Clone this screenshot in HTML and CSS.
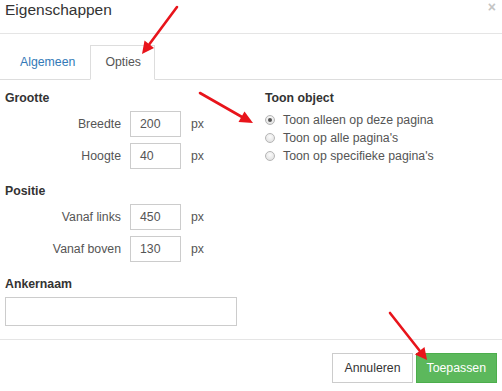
FILE: index.html
```html
<!DOCTYPE html>
<html lang="nl">
<head>
  <meta charset="UTF-8">
  <title>Eigenschappen</title>
  <link rel="stylesheet" href="styles.css">
</head>
<body>

  <div class="dialog">
    <div class="dialog-header">
      <h1>Eigenschappen</h1>
      <span class="close">&times;</span>
    </div>

    <ul class="tabs">
      <li><a href="#">Algemeen</a></li>
      <li class="active"><a href="#">Opties</a></li>
    </ul>

    <div class="dialog-body">
      <div class="columns">
        <div class="col-left">
          <div class="section">
            <h3>Grootte</h3>
            <div class="row"><label>Breedte</label><span class="field">200</span><span class="unit">px</span></div>
            <div class="row"><label>Hoogte</label><span class="field">40</span><span class="unit">px</span></div>
          </div>
          <div class="section">
            <h3>Positie</h3>
            <div class="row"><label>Vanaf links</label><span class="field">450</span><span class="unit">px</span></div>
            <div class="row"><label>Vanaf boven</label><span class="field">130</span><span class="unit">px</span></div>
          </div>
        </div>
        <div class="col-right">
          <h3>Toon object</h3>
          <div class="radio"><span class="dot checked"></span>Toon alleen op deze pagina</div>
          <div class="radio"><span class="dot"></span>Toon op alle pagina's</div>
          <div class="radio"><span class="dot"></span>Toon op specifieke pagina's</div>
        </div>
      </div>
      <div class="section">
        <h3>Ankernaam</h3>
        <div class="wide-field"></div>
      </div>
    </div>

    <div class="dialog-footer">
      <button class="btn">Annuleren</button>
      <button class="btn btn-green">Toepassen</button>
    </div>

    <!-- rode pijlen over de dialoog -->
    <svg class="arrows" width="502" height="391" viewBox="0 0 502 391">
      <g stroke="#e8141b" stroke-width="2.6" fill="#e8141b" stroke-linecap="round">
        <line x1="177" y1="7" x2="149.5" y2="44"/>
        <polygon points="142,54 154,48 144.5,40.5" stroke="none"/>
        <line x1="200" y1="93" x2="242" y2="117"/>
        <polygon points="253,123 238.5,122 244.5,111.5" stroke="none"/>
        <line x1="390" y1="313" x2="419.5" y2="350.5"/>
        <polygon points="427,360 415,354.5 424.5,347" stroke="none"/>
      </g>
    </svg>
  </div>

</body>
</html>
```

FILE: styles.css
```css
body {
  margin: 0;
  font-family: 'Liberation Sans', Arial, sans-serif;
  font-size: 12.3px;
  color: #333;
  background: #fff;
}
.dialog {
  position: relative;
  width: 502px;
  height: 391px;
  overflow: hidden;
}
.dialog-header {
  display: flex;
  justify-content: space-between;
  align-items: flex-start;
  height: 33px;
  border-bottom: 1px solid #e5e5e5;
  padding-left: 5px;
  padding-right: 6px;
}
.dialog-header h1 {
  margin: 0;
  font-size: 15.5px;
  font-weight: normal;
  line-height: 20px;
  color: #333;
}
.close {
  font-size: 14px;
  font-weight: bold;
  line-height: 14px;
  color: #c4c4c4;
}
.tabs {
  display: flex;
  list-style: none;
  margin: 11px 0 0;
  padding: 0 0 0 5px;
  border-bottom: 1px solid #ddd;
}
.tabs li {
  margin-right: 1px;
  margin-bottom: -1px;
}
.tabs a {
  display: block;
  padding: 8px 13px 8px 14px;
  line-height: 17px;
  border: 1px solid transparent;
  color: #337ab7;
  text-decoration: none;
}
.tabs .active a {
  color: #555;
  background: #fff;
  border-color: #ddd #ddd transparent;
}
.dialog-body {
  padding: 11px 5px 13px;
  border-bottom: 1px solid #e5e5e5;
}
.columns {
  display: flex;
}
.col-left {
  width: 260px;
}
h3 {
  margin: 0 0 5px;
  font-size: 12.3px;
  font-weight: bold;
  line-height: 15px;
  color: #333;
}
.section {
  margin-bottom: 15px;
}
.dialog-body > .section {
  margin-bottom: 0;
}
.row {
  display: flex;
  align-items: center;
  height: 26px;
  margin-bottom: 6px;
}
.row:last-child {
  margin-bottom: 0;
}
.row label {
  width: 116px;
  margin-right: 9px;
  text-align: right;
  color: #555;
}
.field {
  box-sizing: border-box;
  width: 51px;
  height: 26px;
  line-height: 24px;
  padding-left: 9px;
  border: 1px solid #ccc;
  color: #555;
}
.unit {
  margin-left: 10px;
  color: #555;
}
.radio {
  display: flex;
  align-items: center;
  height: 18px;
  color: #555;
}
.dot {
  box-sizing: border-box;
  width: 10px;
  height: 10px;
  margin-right: 8px;
  border-radius: 50%;
  border: 1px solid #b5b5b5;
  background: radial-gradient(circle at 50% 35%, #fbfbfb, #dcdcdc);
  position: relative;
}
.dot.checked::after {
  content: "";
  position: absolute;
  left: 2px;
  top: 2px;
  width: 4px;
  height: 4px;
  border-radius: 50%;
  background: #555;
}
.wide-field {
  box-sizing: border-box;
  width: 232px;
  height: 29px;
  border: 1px solid #ccc;
}
.dialog-footer {
  display: flex;
  justify-content: flex-end;
  gap: 3px;
  padding: 13px 5px 0;
}
.btn {
  height: 30px;
  padding: 0 11px;
  font-family: inherit;
  font-size: 12.3px;
  color: #333;
  background: #fff;
  border: 1px solid #ccc;
}
.btn-green {
  color: #fff;
  background: #5cb85c;
  border-color: #4cae4c;
  padding: 0 10px;
}
.arrows {
  position: absolute;
  left: 0;
  top: 0;
  pointer-events: none;
}
```
